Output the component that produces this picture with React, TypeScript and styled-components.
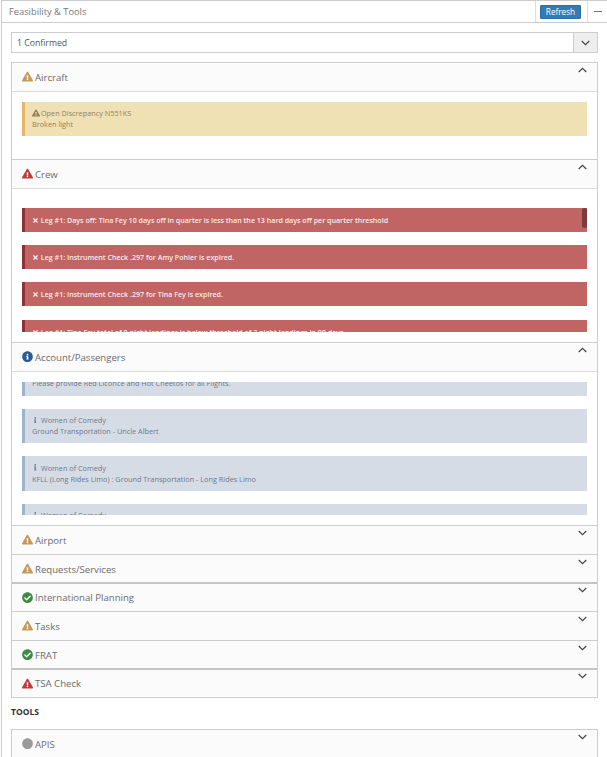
import React from 'react'
import styled, { createGlobalStyle } from 'styled-components'
import { FaCheckCircle, FaCircle, FaExclamationTriangle, FaInfo, FaInfoCircle, FaTimes } from 'react-icons/fa'

const GlobalStyle = createGlobalStyle`
  html, body {
    margin: 0;
    padding: 0;
    height: 757px;
    overflow: hidden;
    background: #fff;
  }
  body {
    font-family: "Open Sans", sans-serif;
    color: #666;
  }
`

type Status = 'warning' | 'danger' | 'info' | 'success' | 'none'

const statusColor: Record<Status, string> = {
  warning: '#c49a5a',
  danger: '#c0393f',
  info: '#2d5c92',
  success: '#3c8a45',
  none: '#9a9a9a',
}

function StatusIcon({ status }: { status: Status }) {
  if (status === 'warning' || status === 'danger') return <FaExclamationTriangle />
  if (status === 'info') return <FaInfoCircle />
  if (status === 'success') return <FaCheckCircle />
  return <FaCircle />
}

function Chevron({ up }: { up?: boolean }) {
  return (
    <ChevronSvg viewBox="0 0 9 6" $up={up}>
      <path d="M0.7 1 L4.5 4.6 L8.3 1" />
    </ChevronSvg>
  )
}

function Section({ title, status, open, thick, short, children }: {
  title: string
  status: Status
  open?: boolean
  thick?: boolean
  short?: boolean
  children?: React.ReactNode
}) {
  return (
    <SectionBox $thick={thick}>
      <SectionHeader $open={open} $short={short} $thick={thick}>
        <SectionIcon $status={status}><StatusIcon status={status} /></SectionIcon>
        <SectionTitle>{title}</SectionTitle>
        <Chevron up={open} />
      </SectionHeader>
      {children}
    </SectionBox>
  )
}

const crewAlerts = [
  'Leg #1: Days off: Tina Fey 10 days off in quarter is less than the 13 hard days off per quarter threshold',
  'Leg #1: Instrument Check .297 for Amy Pohler is expired.',
  'Leg #1: Instrument Check .297 for Tina Fey is expired.',
  'Leg #1: Tina Fey total of 0 night landings is below threshold of 3 night landings in 90 days',
]

const paxAlerts = [
  { title: 'Women of Comedy', text: 'Please provide Red Licorice and Hot Cheetos for all Flights.' },
  { title: 'Women of Comedy', text: 'Ground Transportation - Uncle Albert' },
  { title: 'Women of Comedy', text: 'KFLL (Long Rides Limo) : Ground Transportation - Long Rides Limo' },
  { title: 'Women of Comedy', text: 'Ground Transportation' },
]

export default function App() {
  return (
    <>
      <GlobalStyle />
      <Panel>
        <PanelHeader>
          <PanelTitle>Feasibility &amp; Tools</PanelTitle>
          <RefreshCell>
            <RefreshButton>Refresh</RefreshButton>
          </RefreshCell>
          <CollapseCell><CollapseDash /></CollapseCell>
        </PanelHeader>
        <PanelBody>
          <SelectBox>
            <SelectValue>1 Confirmed</SelectValue>
            <SelectButton><Chevron /></SelectButton>
          </SelectBox>

          <Accordion>
            <Section title="Aircraft" status="warning" open>
              <AircraftBody>
                <WarningAlert>
                  <AlertLine><FaExclamationTriangle /> Open Discrepancy N551KS</AlertLine>
                  <div>Broken light</div>
                </WarningAlert>
              </AircraftBody>
            </Section>

            <Section title="Crew" status="danger" open>
              <ScrollBody>
                <ScrollView>
                  <CrewList>
                    {crewAlerts.map(text => (
                      <DangerAlert key={text}>
                        <FaTimes /> {text}
                      </DangerAlert>
                    ))}
                  </CrewList>
                  <ScrollThumb />
                </ScrollView>
              </ScrollBody>
            </Section>

            <Section title="Account/Passengers" status="info" open>
              <ScrollBody>
                <ScrollView>
                  <PaxList>
                    {paxAlerts.map(({ title, text }) => (
                      <InfoAlert key={text}>
                        <AlertLine><InfoGlyph><FaInfo /></InfoGlyph> {title}</AlertLine>
                        <div>{text}</div>
                      </InfoAlert>
                    ))}
                  </PaxList>
                </ScrollView>
              </ScrollBody>
            </Section>

            <Section title="Airport" status="warning" />
            <Section title="Requests/Services" status="warning" short />
            <Section title="International Planning" status="success" thick />
            <Section title="Tasks" status="warning" />
            <Section title="FRAT" status="success" short />
            <Section title="TSA Check" status="danger" thick />
          </Accordion>

          <ToolsHeading>TOOLS</ToolsHeading>

          <Accordion>
            <Section title="APIS" status="none" />
          </Accordion>
        </PanelBody>
      </Panel>
    </>
  )
}

const Panel = styled.div`
  box-sizing: border-box;
  width: 606px;
  height: 757px;
  margin-left: 1px;
  border-top: solid 1px #ccc;
  border-left: solid 1px #ccc;
  overflow: hidden;
`

const PanelHeader = styled.div`
  display: flex;
  align-items: stretch;
  height: 21px;
  border-bottom: solid 1px #ccc;
`

const PanelTitle = styled.div`
  flex: 1 1 auto;
  padding-left: 7px;
  font-size: 9.3px;
  line-height: 21px;
  color: #777;
`

const RefreshCell = styled.div`
  display: flex;
  align-items: center;
  width: 52px;
  padding-left: 4px;
  box-sizing: border-box;
  border-left: solid 1px #ddd;
`

const RefreshButton = styled.button.attrs({ type: 'button' })`
  width: 41px;
  height: 14px;
  margin: 0;
  padding: 0;
  border: solid 1px #2e6da4;
  border-radius: 1px;
  background-color: #337ab7;
  color: #fff;
  font-family: inherit;
  font-size: 8.2px;
  line-height: 12px;
`

const CollapseCell = styled.div`
  display: flex;
  align-items: center;
  justify-content: center;
  width: 20px;
  box-sizing: border-box;
  border-left: solid 1px #ddd;
`

const CollapseDash = styled.div`
  width: 8px;
  height: 1px;
  background-color: #777;
`

const PanelBody = styled.div`
  padding: 9px 9px 0 9px;
`

const SelectBox = styled.div`
  display: flex;
  align-items: stretch;
  height: 21px;
  box-sizing: border-box;
  border: solid 1px #ccc;
`

const SelectValue = styled.div`
  flex: 1 1 auto;
  padding-left: 5px;
  font-size: 8.7px;
  line-height: 20px;
  color: #555;
`

const SelectButton = styled.div`
  display: flex;
  align-items: center;
  justify-content: center;
  width: 23px;
  border-left: solid 1px #ccc;
  background-color: #eee;
`

const Accordion = styled.div`
  margin-top: 9px;
  border-left: solid 1px #ccc;
  border-right: solid 1px #ccc;
  border-bottom: solid 1px #ccc;
`

const SectionBox = styled.div<{ $thick?: boolean }>`
  border-top: solid ${p => (p.$thick ? '2px' : '1px')} ${p => (p.$thick ? '#c4c4c4' : '#ccc')};
`

const SectionHeader = styled.div<{ $open?: boolean; $short?: boolean; $thick?: boolean }>`
  display: flex;
  align-items: center;
  position: relative;
  height: ${p => (p.$short ? '26px' : p.$thick ? '27px' : '28px')};
  padding: ${p => (p.$short ? '1px' : '0')} 0 0 10px;
  background-color: #fbfbfb;
  border-bottom: ${p => (p.$open ? 'solid 1px #ddd' : 'none')};

  > svg {
    position: absolute;
    top: ${p => (p.$thick ? '3px' : '4px')};
    right: 10px;
  }
`

const SectionIcon = styled.span<{ $status: Status }>`
  display: flex;
  align-items: center;
  justify-content: center;
  width: 11px;
  height: 11px;
  margin-right: 2px;
  color: ${p => statusColor[p.$status]};
  font-size: 11.4px;
`

const SectionTitle = styled.span`
  font-size: 9.6px;
  color: #6b6b6b;
`

const ChevronSvg = styled.svg<{ $up?: boolean }>`
  width: 9px;
  height: 6px;
  fill: none;
  stroke: #444;
  stroke-width: 1.2;
  transform: ${p => (p.$up ? 'rotate(180deg)' : 'none')};
`

const AircraftBody = styled.div`
  height: 67px;
  box-sizing: border-box;
  padding: 10px 10px 0;
`

const Alert = styled.div`
  box-sizing: border-box;
  border-left: solid 3px;
  font-size: 7.3px;
  line-height: 11px;
`

const AlertLine = styled.div`
  > svg {
    margin-right: -1px;
    font-size: 8px;
    vertical-align: -1px;
  }
`

const WarningAlert = styled(Alert)`
  height: 34px;
  padding: 6px 7px;
  border-left-color: #e5b565;
  background-color: #f0e1b5;
  color: #94805c;
`

const ScrollBody = styled.div`
  height: 153px;
  box-sizing: border-box;
  padding: 10px;
`

const ScrollView = styled.div`
  position: relative;
  height: 133px;
  overflow: hidden;
`

const CrewList = styled.div`
  display: flex;
  flex-direction: column;
  gap: 13.2px;
  padding-top: 9px;
`

const DangerAlert = styled(Alert)`
  flex-shrink: 0;
  height: 24px;
  padding: 0 7px;
  border-left-color: #8e3234;
  background-color: #c06464;
  color: #fbeaea;
  font-size: 7.1px;
  font-weight: 600;
  line-height: 24px;

  svg {
    font-size: 7px;
    vertical-align: -1px;
  }
`

const ScrollThumb = styled.div`
  position: absolute;
  top: 9px;
  right: 0;
  width: 5px;
  height: 20px;
  border-radius: 2px;
  background-color: #7a3c3e;
`

const PaxList = styled.div`
  display: flex;
  flex-direction: column;
  gap: 13px;
  margin-top: -21px;
`

const InfoAlert = styled(Alert)`
  flex-shrink: 0;
  height: 34.5px;
  padding: 6.6px 7px;
  border-left-color: #9db3cc;
  background-color: #d5dce6;
  color: #6f7a89;

  &:first-child {
    padding-top: 5.6px;
  }
`

const InfoGlyph = styled.span`
  display: inline-block;
  width: 7px;
  text-align: center;
  color: #6f8299;
  svg {
    font-size: 6.5px;
  }
`

const ToolsHeading = styled.div`
  margin-top: 8px;
  margin-bottom: 11px;
  font-size: 8.5px;
  font-weight: 700;
  line-height: 12px;
  color: #333;
`
